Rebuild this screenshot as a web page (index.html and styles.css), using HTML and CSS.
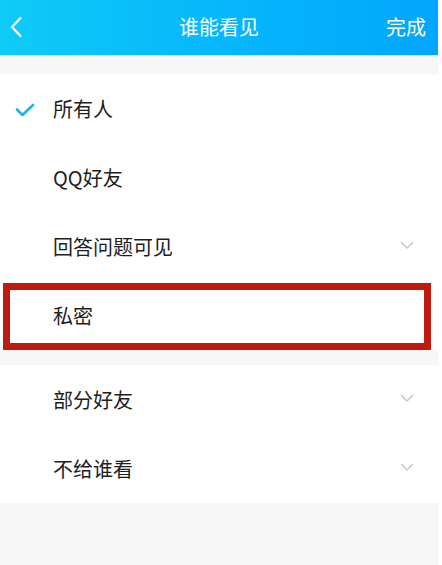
FILE: index.html
```html
<!DOCTYPE html>
<html lang="zh-CN">
<head>
<meta charset="utf-8">
<title>谁能看见</title>
<link rel="stylesheet" href="styles.css">
</head>
<body>
<div class="page">
  <header class="topbar">
    <span class="back">
      <svg width="14" height="24" viewBox="0 0 14 24"><path d="M11.5 3 L3 12 L11.5 21" fill="none" stroke="#fff" stroke-width="2.4" stroke-linecap="round" stroke-linejoin="round"/></svg>
    </span>
    <span class="title">谁能看见</span>
    <span class="done">完成</span>
  </header>
  <section class="group first">
    <div class="row">
      <span class="check">
        <svg width="20" height="14" viewBox="0 0 20 14"><path d="M2 6.5 L7.5 12 L18 2" fill="none" stroke="#1db3ea" stroke-width="2.6" stroke-linecap="round" stroke-linejoin="round"/></svg>
      </span>
      <span class="label">所有人</span>
    </div>
    <div class="row"><span class="label">QQ好友</span></div>
    <div class="row"><span class="label">回答问题可见</span><span class="chev"><svg width="14" height="9" viewBox="0 0 14 9"><path d="M1.5 1.5 L7 7 L12.5 1.5" fill="none" stroke="#c9c9cc" stroke-width="1.6" stroke-linecap="round" stroke-linejoin="round"/></svg></span></div>
    <div class="row marked"><span class="label">私密</span><span class="highlight"></span></div>
  </section>
  <section class="group second">
    <div class="row"><span class="label">部分好友</span><span class="chev"><svg width="14" height="9" viewBox="0 0 14 9"><path d="M1.5 1.5 L7 7 L12.5 1.5" fill="none" stroke="#c9c9cc" stroke-width="1.6" stroke-linecap="round" stroke-linejoin="round"/></svg></span></div>
    <div class="row"><span class="label">不给谁看</span><span class="chev"><svg width="14" height="9" viewBox="0 0 14 9"><path d="M1.5 1.5 L7 7 L12.5 1.5" fill="none" stroke="#c9c9cc" stroke-width="1.6" stroke-linecap="round" stroke-linejoin="round"/></svg></span></div>
  </section>
</div>
</body>
</html>
```
FILE: styles.css
```css
html, body {
  margin: 0;
  padding: 0;
  background: #ffffff;
}
body {
  font-family: "Noto Sans CJK SC", "Noto Sans", sans-serif;
}
.page {
  width: 438px;
  height: 565px;
  background: #f7f7f7;
  overflow: hidden;
}
.topbar {
  height: 55px;
  border-bottom: 1px solid #bfeafb;
  background: linear-gradient(90deg, #0fcbf6 0%, #07b7fb 50%, #03a6fc 100%);
  display: flex;
  align-items: center;
  justify-content: space-between;
  color: #ffffff;
  padding: 0 12px 0 9px;
  position: relative;
}
.back {
  display: flex;
  align-items: center;
  margin-top: -2px;
}
.title {
  position: absolute;
  left: 0;
  right: 0;
  text-align: center;
  font-size: 20px;
  line-height: 28px;
  margin-top: -2px;
  pointer-events: none;
}
.done {
  font-size: 20px;
  line-height: 28px;
  margin-top: -2px;
}
.group {
  background: #ffffff;
}
.group.first {
  margin-top: 18px;
}
.group.second {
  margin-top: 15px;
}
.row {
  height: 69px;
  display: flex;
  align-items: center;
  padding-left: 53px;
  padding-right: 24px;
  position: relative;
}
.label {
  font-size: 20px;
  color: #1e1e1e;
  line-height: 28px;
  flex: 1;
}
.check {
  position: absolute;
  left: 15px;
  top: 29px;
  display: flex;
}
.chev {
  display: flex;
  margin-top: -2px;
}
.highlight {
  position: absolute;
  left: 3px;
  top: 2px;
  width: 428px;
  height: 67px;
  box-sizing: border-box;
  border: 7px solid #bf1a10;
}
```
